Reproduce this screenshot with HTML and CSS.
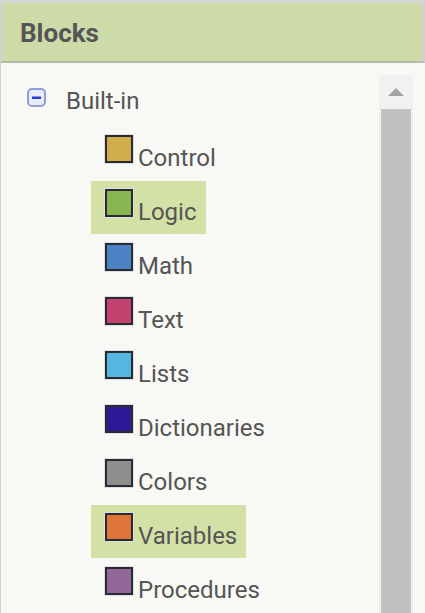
FILE: index.html
```html
<!DOCTYPE html>
<html>
<head>
<meta charset="utf-8">
<link rel="stylesheet" href="styles.css">
</head>
<body>
<div class="panel">
  <div class="header">Blocks</div>
  <div class="content">
    <div class="tree">
      <div class="builtin"><svg class="minus" width="19" height="19" viewBox="0 0 19 19"><rect x="1" y="1" width="17" height="17" rx="4" fill="#e9edf9" stroke="#8d9edd" stroke-width="2"/><rect x="5" y="8.5" width="9" height="2.5" fill="#2b3bd6"/></svg>Built-in</div>
      <div class="items">
        <div class="item"><span class="sq c-control"></span>Control</div>
        <div class="item sel"><span class="sq c-logic"></span>Logic</div>
        <div class="item"><span class="sq c-math"></span>Math</div>
        <div class="item"><span class="sq c-text"></span>Text</div>
        <div class="item"><span class="sq c-lists"></span>Lists</div>
        <div class="item"><span class="sq c-dict"></span>Dictionaries</div>
        <div class="item"><span class="sq c-colors"></span>Colors</div>
        <div class="item sel"><span class="sq c-vars"></span>Variables</div>
        <div class="item"><span class="sq c-procs"></span>Procedures</div>
      </div>
    </div>
    <div class="scroll">
      <div class="sbtn"><svg width="16" height="8" viewBox="0 0 16 8"><polygon points="8,0 16,8 0,8" fill="#a3a3a3"/></svg></div>
      <div class="thumb"></div>
    </div>
  </div>
</div>
</body>
</html>
```
FILE: styles.css
```css
html, body {
  margin: 0;
  padding: 0;
  width: 425px;
  height: 613px;
  overflow: hidden;
  background: #f8f9f4;
  font-family: Roboto, "Liberation Sans", sans-serif;
  color: #555555;
}
.panel {
  width: 425px;
  height: 613px;
  display: flex;
  flex-direction: column;
}
.header {
  box-sizing: border-box;
  height: 63px;
  flex: none;
  background: #cddba9;
  border-top: 3px solid #d5d5d3;
  border-left: 3px solid #d0d0ce;
  border-right: 3px solid #d0d0ce;
  border-bottom: 2px solid #b7b9a9;
  font-size: 26px;
  font-weight: bold;
  line-height: 58px;
  padding: 1px 0 0 17px;
  color: #555555;
}
.content {
  flex: 1;
  display: flex;
  border-left: 1px solid #cfcfcf;
  min-height: 0;
}
.tree {
  flex: 1;
  font-size: 24px;
}
.builtin {
  padding: 24px 0 12px 26px;
  line-height: 28px;
  height: 28px;
}
.minus {
  display: inline-block;
  vertical-align: baseline;
  margin-bottom: 2px;
  margin-right: 20px;
}
.items {
  display: flex;
  flex-direction: column;
  align-items: flex-start;
  padding-left: 90px;
}
.item {
  box-sizing: border-box;
  height: 53px;
  margin-bottom: 1px;
  padding: 8px 9px 0 14px;
  line-height: 28px;
  white-space: nowrap;
}
.item.sel {
  background: #d4e1a6;
}
.sq {
  display: inline-block;
  box-sizing: border-box;
  width: 28px;
  height: 28px;
  border: 2px solid #2b2b2b;
  box-shadow: 0 0 0 1px #dadff0;
  vertical-align: baseline;
  margin-bottom: 3px;
  margin-right: 5px;
}
.c-control { background: #cfad4b; }
.c-logic { background: #88b54f; }
.c-math { background: #4a82c3; }
.c-text { background: #c4426f; }
.c-lists { background: #55b6df; }
.c-dict { background: #2e1a97; }
.c-colors { background: #8e8e8e; }
.c-vars { background: #e0753a; }
.c-procs { background: #93679a; }
.scroll {
  width: 34px;
  margin: 12px 12px 0 0;
  background: #f1f1f1;
  display: flex;
  flex-direction: column;
}
.sbtn {
  height: 34px;
  display: flex;
  align-items: center;
  justify-content: center;
}
.thumb {
  flex: 1;
  margin: 0 2px;
  background: #c1c1c1;
}
```
